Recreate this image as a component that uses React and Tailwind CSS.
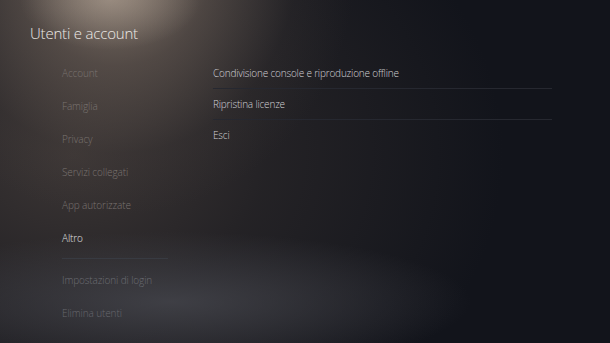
export default function App() {
  const left = ["Account", "Famiglia", "Privacy", "Servizi collegati", "App autorizzate"];
  const right = [
    "Condivisione console e riproduzione offline",
    "Ripristina licenze",
    "Esci",
  ];
  return (
    <div
      className="relative w-[610px] h-[343px] overflow-hidden bg-[#12141b] text-white"
      style={{ fontFamily: '"Open Sans", "Noto Sans", sans-serif' }}
    >
      <div className="absolute inset-0 bg-[radial-gradient(ellipse_430px_340px_at_12%_45%,rgba(60,54,53,1),rgba(42,39,41,0.75)_45%,rgba(25,25,30,0)_100%)]" />
      <div className="absolute inset-0 bg-[radial-gradient(ellipse_300px_70px_at_28%_88%,rgba(72,73,80,0.75),rgba(72,73,80,0)_100%)]" />
      <div className="absolute inset-0 bg-[radial-gradient(ellipse_240px_250px_at_19%_-10%,rgba(160,143,128,0.85),rgba(120,106,96,0.5)_40%,rgba(80,72,68,0.15)_75%,rgba(80,72,68,0)_100%)]" />
      <div className="absolute inset-0 bg-[radial-gradient(ellipse_90px_50px_at_18%_0%,rgba(200,185,170,0.4),rgba(200,185,170,0)_100%)]" />
      <div className="relative flex flex-col h-full">
        <div className="pl-[30px] pt-[23px] text-[15px] font-light leading-[20px] tracking-[-0.2px] text-[#ece9e6]">
          Utenti e account
        </div>
        <div className="flex mt-[14px]">
          <div className="ml-[62px] w-[106px] flex flex-col text-[10px] font-light tracking-[-0.1px]">
            {left.map((l) => (
              <div key={l} className="h-[33px] flex items-center text-[#7a7370] whitespace-nowrap">
                {l}
              </div>
            ))}
            <div className="h-[33px] flex items-center text-[#e4e4e6] whitespace-nowrap">Altro</div>
            <div className="h-px bg-[#383b42] mt-[3px]" />
            <div className="h-[33px] mt-[5px] flex items-center text-[#6c6d73] whitespace-nowrap">
              Impostazioni di login
            </div>
            <div className="h-[33px] flex items-center text-[#66676d] whitespace-nowrap">
              Elimina utenti
            </div>
          </div>
          <div className="ml-[45px] w-[339px] pt-[1px] flex flex-col text-[10px] font-light tracking-[-0.18px] text-[#d2d2d6]">
            {right.map((r, i) => (
              <div key={r} className="flex flex-col">
                <div className="h-[30px] flex items-center whitespace-nowrap">{r}</div>
                {i < right.length - 1 && <div className="h-px bg-[#262830]" />}
              </div>
            ))}
          </div>
        </div>
      </div>
    </div>
  );
}
